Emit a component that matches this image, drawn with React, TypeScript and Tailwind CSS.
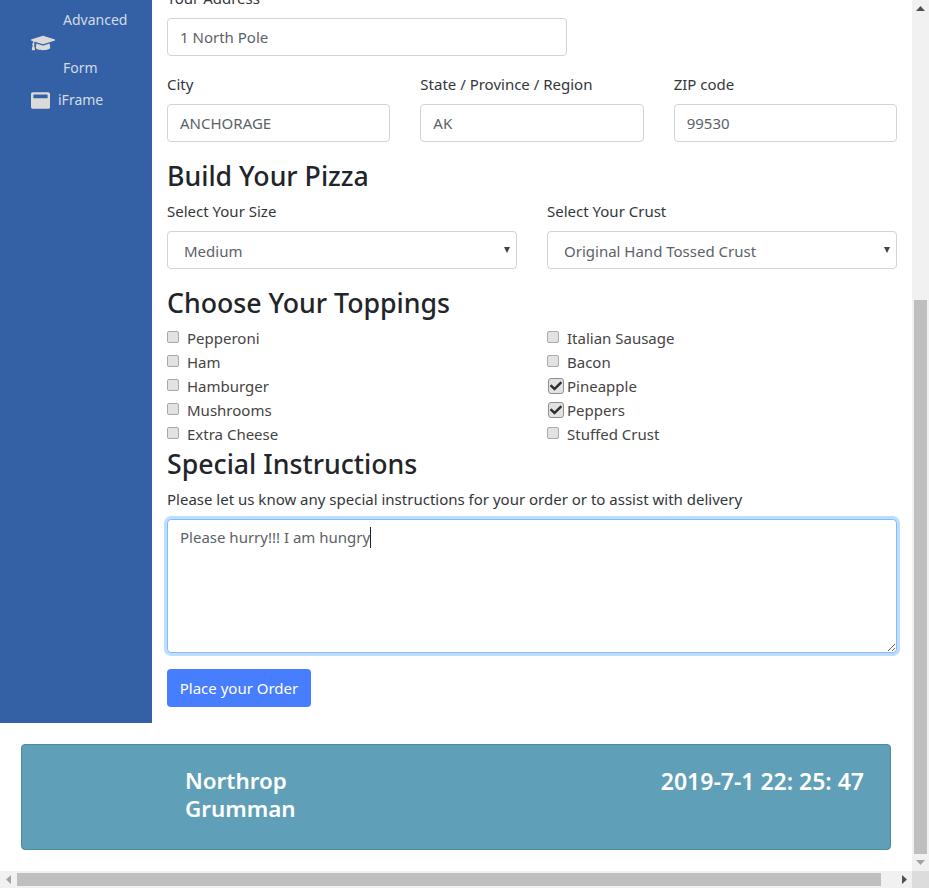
import React from 'react';
import { FaGraduationCap, FaWindowMaximize, FaCheck } from 'react-icons/fa';

const inputClass =
  'block w-full h-[38px] px-3 bg-white border border-[#ced4da] rounded text-[15px] text-[#5c6268] outline-none';

const headingClass = 'h-[40px] text-[26.7px] leading-[40px] font-medium text-[#212529]';

const leftToppings = [
  { name: 'Pepperoni', checked: false },
  { name: 'Ham', checked: false },
  { name: 'Hamburger', checked: false },
  { name: 'Mushrooms', checked: false },
  { name: 'Extra Cheese', checked: false },
];

const rightToppings = [
  { name: 'Italian Sausage', checked: false },
  { name: 'Bacon', checked: false },
  { name: 'Pineapple', checked: true },
  { name: 'Peppers', checked: true },
  { name: 'Stuffed Crust', checked: false },
];

const Topping: React.FC<{ name: string; checked: boolean }> = ({ name, checked }) => (
  <div className="flex items-center h-6">
    {checked ? (
      <span className="flex items-center justify-center w-4 h-4 ml-px mr-[3px] bg-[#e2e2e2] border border-[#8f8f8f] rounded-[3px] text-[#2e2e2e]">
        <FaCheck size={12} />
      </span>
    ) : (
      <span className="w-3 h-3 mb-[2px] mr-2 bg-[#e2e2e2] border border-[#a9a9a9] rounded-[2px]" />
    )}
    <span className="text-[#444]">{name}</span>
  </div>
);

const Field: React.FC<{ label: string; value: string }> = ({ label, value }) => (
  <div>
    <label className="block h-[34px] pt-[3px] text-[#33373b]">{label}</label>
    <input type="text" defaultValue={value} className={inputClass} />
  </div>
);

const SelectBox: React.FC<{ label: string; value: string }> = ({ label, value }) => (
  <div>
    <label className="block h-7 text-[#33373b]">{label}</label>
    <div className="relative mt-[3px]">
      <select defaultValue={value} className={inputClass + ' pl-4 pt-[2px] appearance-none'}>
        <option>{value}</option>
      </select>
      <svg className="absolute right-[7px] top-[16px]" width="6" height="6" viewBox="0 0 6 6">
        <path d="M0 0h6L3 6z" fill="#444" />
      </svg>
    </div>
  </div>
);

const VerticalScrollbar = () => (
  <div className="flex flex-col items-center w-[17px] bg-[#f1f1f1] shrink-0">
    <svg className="mt-[6px]" width="9" height="5" viewBox="0 0 9 5">
      <path d="M4.5 0L9 5H0z" fill="#505050" />
    </svg>
    <div className="mt-[289px] w-[13px] h-[554px] bg-[#bfbfbf]" />
    <svg className="mt-[6px]" width="9" height="5" viewBox="0 0 9 5">
      <path d="M0 0h9L4.5 5z" fill="#a3a3a3" />
    </svg>
  </div>
);

const HorizontalScrollbar = () => (
  <div className="flex items-center h-[17px] bg-[#f1f1f1] shrink-0">
    <svg className="ml-[6px]" width="5" height="9" viewBox="0 0 5 9">
      <path d="M5 0v9L0 4.5z" fill="#a3a3a3" />
    </svg>
    <div className="ml-[6px] w-[864px] h-[13px] bg-[#bfbfbf]" />
    <svg className="ml-[21px]" width="5" height="9" viewBox="0 0 5 9">
      <path d="M0 0l5 4.5L0 9z" fill="#505050" />
    </svg>
    <div className="ml-auto w-[17px] h-[17px] bg-[#dcdcdc]" />
  </div>
);

const App: React.FC = () => {
  return (
    <div className="flex flex-col w-[929px] h-[888px] overflow-hidden bg-white font-['Noto_Sans',sans-serif] text-[15px]">
      <div className="flex flex-1 min-h-0">
        <div className="flex-1 min-w-0 overflow-hidden">
          <div className="flex">
            <aside className="w-[152px] h-[723px] shrink-0 bg-[#3461a5] text-sm text-[#d2dbe8] pl-[31px] pt-[8px]">
              <div className="flex items-center h-[72px]">
                <FaGraduationCap size={24} className="text-[#dadada] shrink-0 -mt-[2px]" />
                <div className="ml-2 w-[70px] flex flex-col gap-6">
                  <span className="leading-6">Advanced</span>
                  <span className="leading-6">Form</span>
                </div>
              </div>
              <div className="flex items-center h-6 mt-2">
                <FaWindowMaximize size={19} className="text-[#dadada] shrink-0" />
                <span className="ml-2">iFrame</span>
              </div>
            </aside>

            <main className="w-[730px] ml-[15px] -mt-[13px]">
              <label className="block h-[31px] text-[#33373b]">Your Address</label>
              <input type="text" defaultValue="1 North Pole" className={inputClass + ' !w-[400px]'} />

              <div className="grid grid-cols-3 gap-[30px] mt-[14px]">
                <Field label="City" value="ANCHORAGE" />
                <Field label="State / Province / Region" value="AK" />
                <Field label="ZIP code" value="99530" />
              </div>

              <h3 className={'mt-[14px] ' + headingClass}>Build Your Pizza</h3>
              <div className="grid grid-cols-2 gap-[30px] mt-[4px]">
                <SelectBox label="Select Your Size" value="Medium" />
                <SelectBox label="Select Your Crust" value="Original Hand Tossed Crust" />
              </div>

              <h3 className={'mt-[14px] ' + headingClass}>Choose Your Toppings</h3>
              <div className="grid grid-cols-2 gap-[30px] mt-[3px]">
                <div>
                  {leftToppings.map((t) => (
                    <Topping key={t.name} {...t} />
                  ))}
                </div>
                <div>
                  {rightToppings.map((t) => (
                    <Topping key={t.name} {...t} />
                  ))}
                </div>
              </div>

              <h3 className={'-mt-[2px] ' + headingClass}>Special Instructions</h3>
              <p className="mt-[3px] h-6 leading-6 text-[#33373b]">
                Please let us know any special instructions for your order or to assist with delivery
              </p>
              <div className="relative mt-[8px]">
                <textarea
                  defaultValue="Please hurry!!! I am hungry"
                  className="block w-full h-[134px] px-3 py-[6px] bg-white border border-[#80bdff] rounded text-[15px] text-[#5c6268] outline-none shadow-[0_0_0_3px_rgba(0,123,255,0.25)] resize-y"
                />
                <span className="absolute left-[203px] top-[8px] w-px h-[21px] bg-[#222]" />
              </div>
              <button className="block mt-[16px] h-[38px] w-[144px] bg-[#477dff] text-white rounded">Place your Order</button>
            </main>
          </div>

          <div className="mt-[21px] ml-[21px] w-[870px] h-[106px] flex justify-between pr-[26px] pl-[163px] pt-[22px] bg-[#5f9fb7] border border-[#4c8a9f] rounded text-white text-[22.4px] leading-[28px] font-semibold">
            <div>
              Northrop
              <br />
              Grumman
            </div>
            <div className="text-[23px]">2019-7-1 22: 25: 47</div>
          </div>
        </div>
        <VerticalScrollbar />
      </div>
      <HorizontalScrollbar />
    </div>
  );
};

export default App;
